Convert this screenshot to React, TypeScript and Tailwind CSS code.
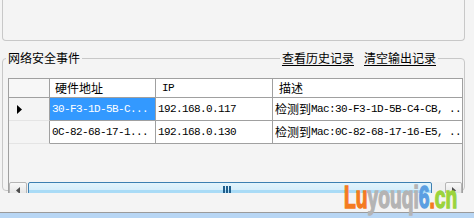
import React from "react";

const cjk = "font-['Noto_Sans_CJK_SC',sans-serif]";
const mono = "font-['Liberation_Mono',monospace] text-[11px] tracking-[-0.6px]";

const rows = [
  { mac: "30-F3-1D-5B-C...", ip: "192.168.0.117", desc: "Mac:30-F3-1D-5B-C4-CB, ..", selected: true },
  { mac: "0C-82-68-17-1...", ip: "192.168.0.130", desc: "Mac:0C-82-68-17-16-E5, ..", selected: false },
];

function Arrow() {
  return (
    <svg width="5" height="9" viewBox="0 0 5 9">
      <path d="M0 0 L5 4.5 L0 9 Z" fill="#000" />
    </svg>
  );
}

function ScrollBar() {
  return (
    <div className="flex h-[11px] overflow-hidden bg-[#f0f0f0]">
      {/* left button */}
      <div className="w-[18px] h-[17px] border border-[#b5b5b5] rounded-[2px] bg-gradient-to-b from-[#f9f9f9] to-[#dcdcdc] flex items-center justify-center">
        <svg width="4" height="7" viewBox="0 0 4 7">
          <path d="M4 0 L0 3.5 L4 7 Z" fill="#4d4d4d" />
        </svg>
      </div>
      {/* thumb */}
      <div className="ml-[1px] w-[404px] h-[17px] border border-[#3c7fb1] rounded-[2px] bg-[linear-gradient(to_bottom,#e3f4fc_0%,#d6eefb_45%,#a9dbf6_46%,#a9dbf6_100%)] flex justify-center pt-[3px]">
        <div className="flex gap-[1px] mr-[6px]">
          <div className="w-[2px] h-[7px] bg-[#1f5e8c]" />
          <div className="w-[2px] h-[7px] bg-[#1f5e8c]" />
          <div className="w-[2px] h-[7px] bg-[#1f5e8c]" />
        </div>
      </div>
      <div className="flex-1" />
      {/* right button */}
      <div className="w-[17px] h-[17px] border border-[#b5b5b5] rounded-[2px] bg-gradient-to-b from-[#f9f9f9] to-[#dcdcdc] flex items-center justify-center">
        <svg width="4" height="7" viewBox="0 0 4 7">
          <path d="M0 0 L4 3.5 L0 7 Z" fill="#4d4d4d" />
        </svg>
      </div>
    </div>
  );
}

function Grid() {
  return (
    <div className="w-[455px] h-[115px] border-x border-t border-[#a0a0a0] bg-[#f4f4f4] overflow-hidden flex flex-col">
      {/* header */}
      <div className="flex h-[19px] shrink-0">
        <div className="w-[41px] shrink-0 bg-[#f7f7f7] border-r border-b border-[#a0a0a0]" />
        <div className={`w-[106px] shrink-0 bg-white border-r border-b border-[#a0a0a0] pl-[5px] text-[12px] leading-[18px] ${cjk}`}>
          硬件地址
        </div>
        <div className={`w-[117px] shrink-0 bg-white border-r border-b border-[#a0a0a0] pl-[6px] leading-[18px] ${mono}`}>
          IP
        </div>
        <div className={`flex-1 bg-white border-b border-[#a0a0a0] pl-[6px] text-[12px] leading-[18px] ${cjk}`}>
          描述
        </div>
      </div>

      {rows.map((r) => (
        <div key={r.mac} className="flex h-[23px] shrink-0">
          <div className="w-[41px] shrink-0 bg-[#f4f4f4] border-r border-[#a0a0a0] border-b border-b-[#e4e4e4] flex items-center pl-[8px]">
            {r.selected && <Arrow />}
          </div>
          <div
            className={`w-[106px] shrink-0 border-r border-b border-[#a0a0a0] pl-[2px] leading-[22px] whitespace-nowrap overflow-hidden ${mono} ${
              r.selected ? "bg-[#3399ff] text-white" : "bg-white"
            }`}
          >
            {r.mac}
          </div>
          <div className={`w-[117px] shrink-0 bg-white border-r border-b border-[#a0a0a0] pl-[2px] leading-[22px] ${mono}`}>
            {r.ip}
          </div>
          <div className="flex-1 bg-white border-b border-[#a0a0a0] pl-[2px] flex items-center whitespace-nowrap overflow-hidden">
            <span className={`text-[12px] leading-[22px] ${cjk}`}>检测到</span>
            <span className={`leading-[22px] ${mono}`}>{r.desc}</span>
          </div>
        </div>
      ))}

      <div className="flex-1" />
      <ScrollBar />
    </div>
  );
}

export default function App() {
  return (
    <div className={`relative w-[474px] h-[218px] overflow-hidden bg-[#f4f4f4] text-black ${cjk}`}>
      {/* upper group box, top edge scrolled out of view */}
      <div className="ml-[2px] w-[463px] h-[41px] border-x border-b border-[#c8c8c8] rounded-b-[4px]" />

      {/* network security events */}
      <div className="relative mt-[17px] ml-[2px] w-[463px] h-[133px] border border-[#c8c8c8] rounded-[4px] pt-[19px] pl-[5px]">
        <span className="absolute left-[3px] -top-[8px] bg-[#f4f4f4] px-[2px] text-[12px] leading-[14px]">
          网络安全事件
        </span>
        <div className="absolute right-[26px] -top-[8px] flex gap-[10px] bg-[#f4f4f4] px-[2px] text-[12px] leading-[14px]">
          <span className="underline underline-offset-2">查看历史记录</span>
          <span className="underline underline-offset-2">清空输出记录</span>
        </div>
        <Grid />
      </div>

      {/* status strip */}
      <div className="mt-[21px] h-[6px] border-t border-[#9a9a9a] bg-[#b8d6f4]" />

      {/* watermark */}
      <div className="absolute left-[344px] top-[182px] origin-left scale-x-[0.62] whitespace-nowrap font-['Liberation_Sans',sans-serif] font-bold text-[31px] leading-[31px] [-webkit-text-stroke:1.5px_currentColor]">
        <span className="text-[#f47b20]">Lu</span>
        <span className="text-[#b4b4b4]">youqi</span>
        <span className="text-[#5a9fe2]">6</span>
        <span className="text-[#f47b20]">.</span>
        <span className="text-[#9bd43c]">cn</span>
      </div>
    </div>
  );
}
